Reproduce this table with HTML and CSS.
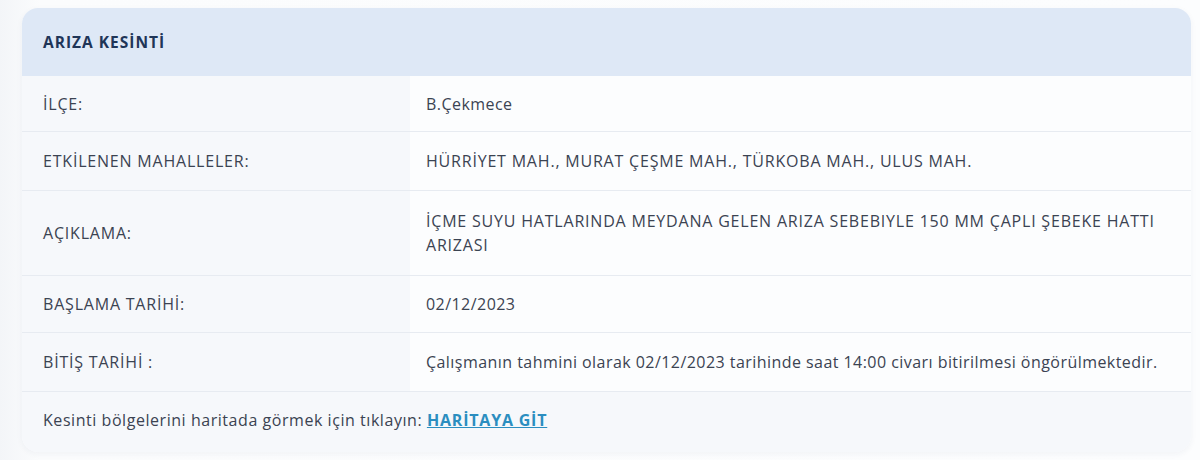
FILE: index.html
```html
<!DOCTYPE html>
<html lang="tr">
<head>
  <meta charset="UTF-8" />
  <meta name="viewport" content="width=device-width, initial-scale=1.0"/>
  <title>Arıza Kesinti</title>
  <link rel="stylesheet" href="styles.css">
</head>
<body>
  <div class="card">
    <div class="card-header">ARIZA KESİNTİ</div>
    <table class="info">
      <tr class="row-1">
        <td class="label">İLÇE:</td>
        <td class="value mixed">B.Çekmece</td>
      </tr>
      <tr class="row-2">
        <td class="label">ETKİLENEN MAHALLELER:</td>
        <td class="value">HÜRRİYET MAH., MURAT ÇEŞME MAH., TÜRKOBA MAH., ULUS MAH.</td>
      </tr>
      <tr class="row-3">
        <td class="label">AÇIKLAMA:</td>
        <td class="value">İÇME SUYU HATLARINDA MEYDANA GELEN ARIZA SEBEBIYLE 150 MM ÇAPLI ŞEBEKE HATTI ARIZASI</td>
      </tr>
      <tr class="row-4">
        <td class="label">BAŞLAMA TARİHİ:</td>
        <td class="value mixed">02/12/2023</td>
      </tr>
      <tr class="row-5">
        <td class="label">BİTİŞ TARİHİ :</td>
        <td class="value mixed">Çalışmanın tahmini olarak 02/12/2023 tarihinde saat 14:00 civarı bitirilmesi öngörülmektedir.</td>
      </tr>
    </table>
    <div class="card-footer">
      Kesinti bölgelerini haritada görmek için tıklayın: <a href="#">HARİTAYA GİT</a>
    </div>
  </div>
</body>
</html>
```

FILE: styles.css
```css
body {
  margin: 0;
  padding: 8px 9px 8px 22px;
  font-family: 'Open Sans', 'Noto Sans', sans-serif;
  font-size: 16px;
  letter-spacing: 0.8px;
  color: #3b4352;
  background: linear-gradient(90deg, #f3f5f8 0, #fbfcfd 40px, #fcfdfe 100%);
}

.card {
  background: #fcfdfe;
  border-radius: 16px;
  overflow: hidden;
  box-shadow: 0 2px 6px rgba(30, 50, 90, 0.05);
}

.card-header {
  background: #dee8f6;
  color: #1f3558;
  font-weight: 700;
  font-size: 15.5px;
  letter-spacing: 1px;
  height: 68px;
  line-height: 68px;
  padding-left: 21px;
}

.info {
  width: 100%;
  border-collapse: collapse;
}

.info td {
  border-bottom: 1px solid #e7ebf1;
  padding: 0;
  vertical-align: middle;
}

.label {
  width: 367px;
  background: #f6f8fb;
  padding-left: 21px !important;
}

.value {
  background: #fcfdfe;
  padding-left: 16px !important;
  padding-right: 12px !important;
  line-height: 24px;
}

.mixed {
  letter-spacing: 0.45px;
}

.row-1 td { height: 55px; }
.row-2 td { height: 58px; }
.row-3 td { height: 84px; }
.row-4 td { height: 56px; }
.row-5 td { height: 58px; }

.card-footer {
  background: #f6f8fb;
  height: 60px;
  line-height: 56px;
  padding-left: 21px;
  letter-spacing: 0.55px;
}

.card-footer a {
  color: #2b8ec0;
  font-weight: 700;
  letter-spacing: 0.8px;
}
```
